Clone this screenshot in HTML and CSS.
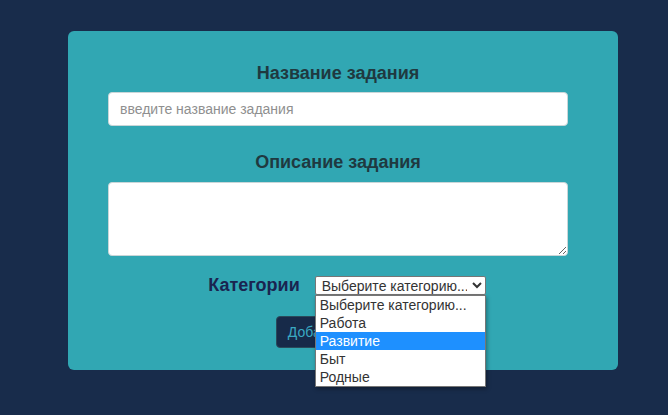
FILE: index.html
```html
<!DOCTYPE html>
<html lang="ru">
<head>
<meta charset="utf-8">
<link rel="stylesheet" href="styles.css">
</head>
<body>
<div class="card">
  <label class="heading" for="title">Название задания</label>
  <input id="title" class="field" type="text" placeholder="введите название задания">
  <label class="heading second" for="desc">Описание задания</label>
  <textarea id="desc" class="area"></textarea>
  <div class="cat-row">
    <span class="cat-label">Категории</span>
    <span class="select-wrap">
      <select class="select">
        <option>Выберите категорию...</option>
      </select>
      <ul class="list">
        <li>Выберите категорию...</li>
        <li>Работа</li>
        <li class="active">Развитие</li>
        <li>Быт</li>
        <li>Родные</li>
      </ul>
    </span>
  </div>
  <button class="btn">Добавить задание</button>
</div>
</body>
</html>
```
FILE: styles.css
```css
html, body {
  margin: 0;
  padding: 0;
  background: #182c4b;
  font-family: "Liberation Sans", Arial, sans-serif;
}
body {
  padding: 31px 50px 0 68px;
  min-height: 100vh;
  box-sizing: border-box;
}
.card {
  width: 550px;
  box-sizing: border-box;
  background: #31a7b3;
  border-radius: 6px;
  padding: 32px 50px 22px 40px;
  display: flex;
  flex-direction: column;
  align-items: center;
}
.heading {
  font-size: 18px;
  font-weight: bold;
  color: #1f3940;
  line-height: 21px;
  margin-bottom: 8px;
}
.heading.second {
  margin-top: 26px;
  margin-bottom: 9px;
}
.field, .area {
  width: 460px;
  box-sizing: border-box;
  border: 1px solid #c9d6d8;
  border-radius: 4px;
  background: #fff;
  font-family: "Liberation Sans", Arial, sans-serif;
  font-size: 14px;
}
.field {
  height: 34px;
  padding: 0 11px;
}
.field::placeholder {
  color: #8f8f8f;
}
.area {
  height: 74px;
  resize: both;
  display: block;
}
.cat-row {
  margin-top: 19px;
  display: flex;
  align-items: center;
  gap: 15px;
  margin-left: 18px;
}
.cat-label {
  font-size: 18px;
  font-weight: bold;
  color: #1a2450;
}
.select-wrap {
  position: relative;
  display: block;
}
.select {
  display: block;
  width: 171px;
  height: 19px;
  font-family: "Liberation Sans", Arial, sans-serif;
  font-size: 14px;
  color: #333;
  border: 1px solid #767676;
  border-radius: 2px;
  background: #fff;
  padding: 0 2px;
}
.list {
  position: absolute;
  top: 19px;
  left: 0;
  width: 171px;
  box-sizing: border-box;
  margin: 0;
  padding: 0;
  list-style: none;
  background: #fff;
  border: 1px solid #767676;
  box-shadow: 1px 2px 4px rgba(0,0,0,0.35);
  z-index: 2;
}
.list li {
  font-size: 14px;
  line-height: 18px;
  height: 18px;
  padding: 0 4px;
  color: #333;
}
.list li.active {
  background: #1e90ff;
  color: #fff;
}
.btn {
  margin-top: 20px;
  margin-left: 14px;
  height: 32px;
  padding: 0 6px 0 11px;
  background: #172a49;
  color: #3aa9c2;
  border: 1px solid #2a4a5a;
  border-radius: 4px;
  font-family: "Liberation Sans", Arial, sans-serif;
  font-size: 14px;
  text-align: left;
}
```
